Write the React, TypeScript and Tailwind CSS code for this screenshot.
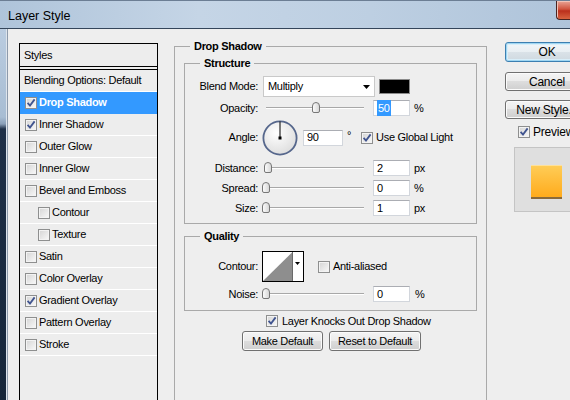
import React from 'react';

type Item = { label: string; checked?: boolean; active?: boolean; sub?: boolean };

const items: Item[] = [
  { label: 'Drop Shadow', checked: true, active: true },
  { label: 'Inner Shadow', checked: true },
  { label: 'Outer Glow' },
  { label: 'Inner Glow' },
  { label: 'Bevel and Emboss' },
  { label: 'Contour', sub: true },
  { label: 'Texture', sub: true },
  { label: 'Satin' },
  { label: 'Color Overlay' },
  { label: 'Gradient Overlay', checked: true },
  { label: 'Pattern Overlay' },
  { label: 'Stroke' },
];

const Check = ({ checked }: { checked?: boolean }) => (
  <span className="flex h-[12px] w-[12px] shrink-0 items-center justify-center border border-[#8e8f8f] bg-[linear-gradient(135deg,#d4d4d4,#f9f9f9)] shadow-[inset_0_0_0_1px_#f3f3f3]">
    {checked && (
      <svg width="10" height="10" viewBox="0 0 10 10">
        <path d="M1.6 4.8 L4 7.6 L8.6 1.4" fill="none" stroke="#40548f" strokeWidth="1.8" />
      </svg>
    )}
  </span>
);

const Slider = ({ pos }: { pos: number }) => (
  <div className="relative ml-[5px] h-[14px] w-[103px] shrink-0">
    <div className="absolute left-[3px] right-[2px] top-[6px] h-[2px] border-t border-[#a8a8a8] bg-white" />
    <div
      style={{ left: pos }}
      className="absolute top-[1px] h-[11px] w-[8px] rounded-t-[4px] rounded-b-[2px] border border-[#777] bg-[linear-gradient(90deg,#fbfbfb,#d8d8d8)]"
    />
  </div>
);

const Field = ({ children, className }: { children: React.ReactNode; className: string }) => (
  <div
    className={`flex h-[16px] shrink-0 items-center border border-[#d2d6dc] border-t-[#abadb3] bg-white pl-[3px] ${className}`}
  >
    {children}
  </div>
);

const Label = ({ children }: { children: React.ReactNode }) => (
  <span className="w-[73px] shrink-0 text-right">{children}</span>
);

const Btn = ({ children, className }: { children: React.ReactNode; className: string }) => (
  <div
    className={`flex shrink-0 items-center justify-center rounded-[3px] border border-[#707070] bg-[linear-gradient(180deg,#f4f4f4_0%,#ebebeb_50%,#dddddd_50%,#cfcfcf_100%)] shadow-[inset_0_0_0_1px_#fbfbfb] ${className}`}
  >
    {children}
  </div>
);

export default function App() {
  return (
    <div className="relative h-[400px] w-[570px] overflow-hidden font-['Liberation_Sans',Arial,sans-serif] text-[11px] tracking-[-0.3px] text-black">
      {/* title bar */}
      <div className="flex h-[29px] items-start border-y border-t-[#6c7e94] border-b-[#34455a] bg-[linear-gradient(90deg,#afc4da,#c5d5e6_35%,#bdcfe2_65%,#afc4da)]">
        <span className="pl-[8px] pt-[6px] text-[12.5px] tracking-[0px]">Layer Style</span>
        <div className="ml-auto h-[19px] w-[14px] rounded-bl-[4px] border-b border-l border-[#4a2420] bg-[linear-gradient(180deg,#e9a596,#d0543e_45%,#bb2f1c_55%,#d8633f)] shadow-[inset_1px_1px_0_#f1c2b6]" />
      </div>

      <div className="flex h-[371px]">
        <div className="w-[6px] shrink-0 bg-[linear-gradient(180deg,#bacce0_0px,#a8bdd3_88px,#8a9fb8_95px,#1f3048_100px,#16263a_100%)]" />
        <div className="w-[1px] shrink-0 bg-[#dde4ec]" />
        <div className="w-[1px] shrink-0 bg-[#8d9aab]" />

        <div className="flex flex-1 items-start bg-[#eeeeee] pl-[11px] pt-[10px]">
          {/* styles list */}
          <div className="mt-[4px] h-[370px] w-[139px] shrink-0 border border-black bg-[#ededed]">
            <div className="flex h-[23px] items-center border-b border-black pl-[4px]">Styles</div>
            <div className="h-[2px]" />
            <div className="border-t border-black">
              <div className="flex h-[22px] items-center border-b border-white pl-[4px]">Blending Options: Default</div>
              {items.map((it) => (
                <div
                  key={it.label}
                  className={`flex h-[22px] items-center gap-[2px] border-b ${
                    it.active ? 'border-[#3399ff] bg-[#3399ff] font-bold text-white' : 'border-white'
                  } ${it.sub ? 'pl-[18px]' : 'pl-[5px]'}`}
                >
                  <Check checked={it.checked} />
                  <span>{it.label}</span>
                </div>
              ))}
            </div>
          </div>

          {/* Drop Shadow group */}
          <fieldset className="ml-[16px] h-[380px] w-[313px] shrink-0 border border-[#a9a9a9] px-[9px]">
            <legend className="ml-[6px] px-[4px] text-[11px] font-bold leading-[14px]">Drop Shadow</legend>

            <fieldset className="mt-[3px] w-[293px] border border-[#a9a9a9] pb-[5px]">
              <legend className="ml-[15px] px-[4px] font-bold leading-[14px]">Structure</legend>
              <div className="pt-[6px]">
                <div className="flex h-[21px] items-center">
                  <Label>Blend Mode:</Label>
                  <div className="relative ml-[5px] flex h-[21px] w-[112px] items-center border border-[#c9c9c9] bg-white pl-[4px]">
                    Multiply
                    <svg className="ml-auto mr-[4px]" width="7" height="4" viewBox="0 0 7 4">
                      <path d="M0 0 H7 L3.5 4 Z" fill="#000" />
                    </svg>
                  </div>
                  <div className="ml-[4px] h-[15px] w-[31px] border border-[#8a8a8a] bg-black" />
                </div>

                <div className="flex h-[22px] items-center">
                  <Label>Opacity:</Label>
                  <Slider pos={49} />
                  <Field className="ml-[7px] w-[37px]">
                    <span className="bg-[#3399ff] px-[1px] text-white">50</span>
                  </Field>
                  <span className="ml-[4px]">%</span>
                </div>

                <div className="flex h-[37px] items-center">
                  <Label>Angle:</Label>
                  <svg className="ml-[4px] shrink-0" width="36" height="36" viewBox="0 0 36 36">
                    <defs>
                      <radialGradient id="dial" cx="40%" cy="35%" r="70%">
                        <stop offset="0%" stopColor="#ffffff" />
                        <stop offset="100%" stopColor="#dcdcdc" />
                      </radialGradient>
                    </defs>
                    <circle cx="18" cy="18" r="16.6" fill="url(#dial)" stroke="#56678c" strokeWidth="1.8" />
                    <line x1="18" y1="1.5" x2="18" y2="18" stroke="#000" strokeWidth="1" />
                    <rect x="16.5" y="16.5" width="3" height="3" fill="#000" />
                  </svg>
                  <Field className="ml-[5px] w-[40px]">90</Field>
                  <span className="mb-[5px] ml-[4px]">°</span>
                  <span className="ml-[10px]">
                    <Check checked />
                  </span>
                  <span className="ml-[3px]">Use Global Light</span>
                </div>

                <div className="mt-[2px] flex h-[20px] items-center">
                  <Label>Distance:</Label>
                  <Slider pos={1} />
                  <Field className="ml-[7px] w-[37px]">2</Field>
                  <span className="ml-[4px]">px</span>
                </div>
                <div className="flex h-[20px] items-center">
                  <Label>Spread:</Label>
                  <Slider pos={-1} />
                  <Field className="ml-[7px] w-[37px]">0</Field>
                  <span className="ml-[4px]">%</span>
                </div>
                <div className="flex h-[20px] items-center">
                  <Label>Size:</Label>
                  <Slider pos={-1} />
                  <Field className="ml-[7px] w-[37px]">1</Field>
                  <span className="ml-[4px]">px</span>
                </div>
              </div>
            </fieldset>

            <fieldset className="mt-[5px] w-[293px] border border-[#a9a9a9] pb-[6px]">
              <legend className="ml-[15px] px-[4px] font-bold leading-[14px]">Quality</legend>
              <div className="mt-[8px] flex h-[31px] items-center">
                <Label>Contour:</Label>
                <div className="ml-[4px] h-[31px] w-[42px] shrink-0 border border-black bg-white">
                  <svg width="40" height="29" viewBox="0 0 40 29">
                    <polygon points="0,29 29.5,0 29.5,29" fill="#8e8e8e" />
                    <line x1="29.5" y1="0" x2="29.5" y2="29" stroke="#6a6a6a" strokeWidth="1" />
                    <polygon points="32,10 37,10 34.5,13" fill="#000" />
                  </svg>
                </div>
                <span className="ml-[14px]">
                  <Check />
                </span>
                <span className="ml-[3px]">Anti-aliased</span>
              </div>
              <div className="mt-[2px] flex h-[20px] items-center">
                <Label>Noise:</Label>
                <Slider pos={-1} />
                <Field className="ml-[7px] w-[37px]">0</Field>
                <span className="ml-[5px]">%</span>
              </div>
            </fieldset>

            <div className="mt-[3px] flex h-[14px] items-center pl-[82px]">
              <Check checked />
              <span className="ml-[4px]">Layer Knocks Out Drop Shadow</span>
            </div>
            <div className="mt-[3px] flex gap-[6px] pl-[58px]">
              <Btn className="h-[20px] w-[81px]">Make Default</Btn>
              <Btn className="h-[20px] w-[92px]">Reset to Default</Btn>
            </div>
          </fieldset>

          {/* right column */}
          <div className="ml-[18px] mt-[3px] flex w-[84px] shrink-0 flex-col text-[12px] tracking-[-0.2px]">
            <div className="flex h-[20px] items-center justify-center rounded-[3px] border border-[#3c7fb1] bg-[linear-gradient(180deg,#f1f6f9_0%,#e8eef2_50%,#dae2e8_50%,#cfd9e0_100%)] shadow-[inset_0_0_0_1px_#9fd6f2,inset_0_0_0_2px_#d8eef9]">
              OK
            </div>
            <Btn className="mt-[10px] h-[19px] w-[84px]">Cancel</Btn>
            <Btn className="mt-[9px] h-[19px] w-[84px] whitespace-nowrap">New Style...</Btn>
            <div className="ml-[13px] mt-[7px] flex h-[12px] items-center">
              <Check checked />
              <span className="ml-[3px]">Preview</span>
            </div>
            <div className="ml-[9px] mt-[9px] h-[65px] w-[75px] border border-[#c4c4c4] bg-[#dfdfdf] pl-[16px] pt-[17px]">
              <div className="h-[32px] w-[31px] bg-[linear-gradient(180deg,#ffcd58,#ffab1c)] shadow-[0_2px_0_#8a6a3a,inset_0_1px_0_#ffe19a]" />
            </div>
          </div>
        </div>
      </div>
    </div>
  );
}
